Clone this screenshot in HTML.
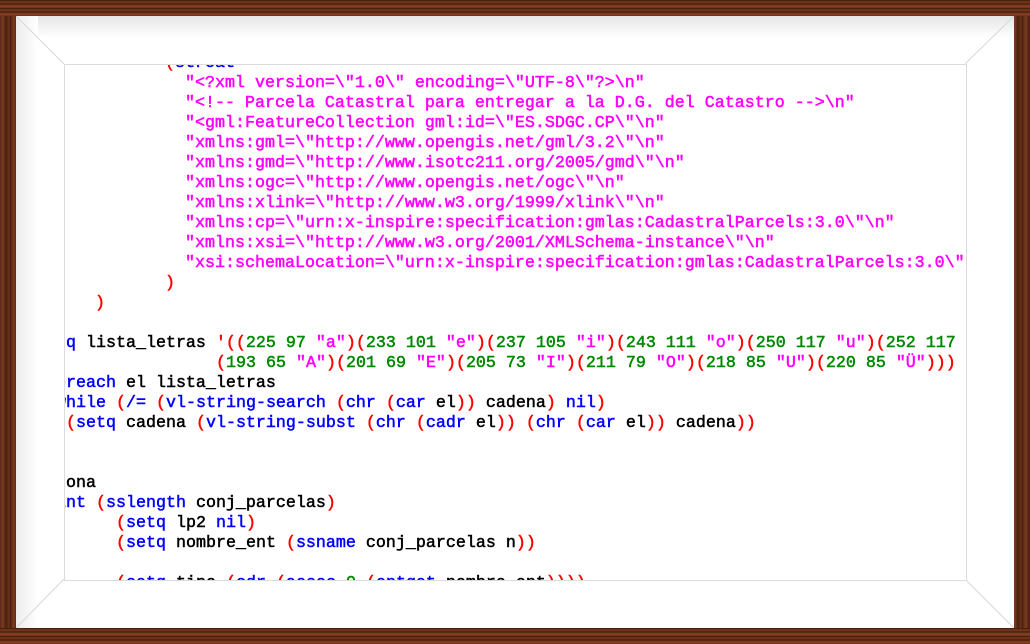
<!DOCTYPE html>
<html><head><meta charset="utf-8"><style>
html,body{margin:0;padding:0;}
body{width:1030px;height:644px;position:relative;overflow:hidden;
background:repeating-linear-gradient(90deg,#5a2a16 0px,#7a3a1e 3px,#4a2010 6px,#6b3218 9px,#3d1a0c 11px);}
.woodh{position:absolute;left:0;width:1030px;height:16px;background:repeating-linear-gradient(0deg,#6a301a 0,#8a4424 2px,#4a2010 4px,#7a3a1e 6px,#3a180a 8px);}
.mat{position:absolute;left:16px;top:16px;width:998px;height:612px;background:#fff;overflow:hidden;}
.shT{position:absolute;left:0;top:0;width:998px;height:22px;background:linear-gradient(#e6e6e6,#fff);}
.shL{position:absolute;left:0;top:0;width:22px;height:612px;background:linear-gradient(90deg,#ececec,#fff);}
.code{position:absolute;left:48px;top:48px;width:901px;height:515px;border:1px solid #dcdcdc;background:#fff;overflow:hidden;}
.l{position:absolute;white-space:pre;font-family:"Liberation Mono","DejaVu Sans Mono",monospace;font-size:16.67px;line-height:20px;font-weight:normal;-webkit-text-stroke:0.5px currentColor;color:#000;}
.r{color:#f00}.b{color:#00f}.m{color:#f0f}.g{color:#080}
svg{position:absolute;left:0;top:0}
</style></head><body>
<div class="woodh" style="top:0"></div><div class="woodh" style="top:628px"></div>
<div class="mat">
<div class="shT"></div><div class="shL"></div>
<svg width="998" height="612"><g stroke="#d8d8d8" stroke-width="1"><line x1="0" y1="0" x2="48" y2="48"/><line x1="998" y1="0" x2="949" y2="48"/><line x1="0" y1="612" x2="48" y2="563"/><line x1="998" y1="612" x2="949" y2="563"/></g></svg>
<div class="code">
<div class="l" style="left:100px;top:-11px"><span class="r">(</span><span class="b">strcat</span></div>
<div class="l m" style="left:120px;top:9px">"&lt;?xml version=\"1.0\" encoding=\"UTF-8\"?&gt;\n"</div>
<div class="l m" style="left:120px;top:29px">"&lt;!-- Parcela Catastral para entregar a la D.G. del Catastro --&gt;\n"</div>
<div class="l m" style="left:120px;top:49px">"&lt;gml:FeatureCollection gml:id=\"ES.SDGC.CP\"\n"</div>
<div class="l m" style="left:120px;top:69px">"xmlns:gml=\"http://www.opengis.net/gml/3.2\"\n"</div>
<div class="l m" style="left:120px;top:89px">"xmlns:gmd=\"http://www.isotc211.org/2005/gmd\"\n"</div>
<div class="l m" style="left:120px;top:109px">"xmlns:ogc=\"http://www.opengis.net/ogc\"\n"</div>
<div class="l m" style="left:120px;top:129px">"xmlns:xlink=\"http://www.w3.org/1999/xlink\"\n"</div>
<div class="l m" style="left:120px;top:149px">"xmlns:cp=\"urn:x-inspire:specification:gmlas:CadastralParcels:3.0\"\n"</div>
<div class="l m" style="left:120px;top:169px">"xmlns:xsi=\"http://www.w3.org/2001/XMLSchema-instance\"\n"</div>
<div class="l m" style="left:120px;top:189px">"xsi:schemaLocation=\"urn:x-inspire:specification:gmlas:CadastralParcels:3.0\"</div>
<div class="l r" style="left:100px;top:209px">)</div>
<div class="l r" style="left:30px;top:229px">)</div>
<div class="l" style="left:-39px;top:269px"><span class="r">(</span><span class="b">setq</span> lista_letras <span class="r">'((</span><span class="g">225 97 </span><span class="m">"a"</span><span class="r">)(</span><span class="g">233 101 </span><span class="m">"e"</span><span class="r">)(</span><span class="g">237 105 </span><span class="m">"i"</span><span class="r">)(</span><span class="g">243 111 </span><span class="m">"o"</span><span class="r">)(</span><span class="g">250 117 </span><span class="m">"u"</span><span class="r">)(</span><span class="g">252 117 </span><span class="m">"ü"</span><span class="r">)</span></div>
<div class="l" style="left:151px;top:289px"><span class="r">(</span><span class="g">193 65 </span><span class="m">"A"</span><span class="r">)(</span><span class="g">201 69 </span><span class="m">"E"</span><span class="r">)(</span><span class="g">205 73 </span><span class="m">"I"</span><span class="r">)(</span><span class="g">211 79 </span><span class="m">"O"</span><span class="r">)(</span><span class="g">218 85 </span><span class="m">"U"</span><span class="r">)(</span><span class="g">220 85 </span><span class="m">"Ü"</span><span class="r">)))</span></div>
<div class="l" style="left:-29px;top:309px"><span class="r">(</span><span class="b">foreach</span> el lista_letras</div>
<div class="l" style="left:-19px;top:329px"><span class="r">(</span><span class="b">while</span> <span class="r">(</span><span class="b">/=</span> <span class="r">(</span><span class="b">vl-string-search</span> <span class="r">(</span><span class="b">chr</span> <span class="r">(</span><span class="b">car</span> el<span class="r">))</span> cadena<span class="r">)</span> <span class="b">nil</span><span class="r">)</span></div>
<div class="l" style="left:1px;top:349px"><span class="r">(</span><span class="b">setq</span> cadena <span class="r">(</span><span class="b">vl-string-subst</span> <span class="r">(</span><span class="b">chr</span> <span class="r">(</span><span class="b">cadr</span> el<span class="r">))</span> <span class="r">(</span><span class="b">chr</span> <span class="r">(</span><span class="b">car</span> el<span class="r">))</span> cadena<span class="r">))</span></div>
<div class="l" style="left:1px;top:409px">ona</div>
<div class="l" style="left:-39px;top:429px"><span class="r">(</span><span class="b">print</span> <span class="r">(</span><span class="b">sslength</span> conj_parcelas<span class="r">)</span></div>
<div class="l" style="left:51px;top:449px"><span class="r">(</span><span class="b">setq</span> lp2 <span class="b">nil</span><span class="r">)</span></div>
<div class="l" style="left:51px;top:469px"><span class="r">(</span><span class="b">setq</span> nombre_ent <span class="r">(</span><span class="b">ssname</span> conj_parcelas n<span class="r">))</span></div>
<div class="l" style="left:51px;top:509px"><span class="r">(</span><span class="b">setq</span> tipo <span class="r">(</span><span class="b">cdr</span> <span class="r">(</span><span class="b">assoc</span> <span class="g">0</span> <span class="r">(</span><span class="b">entget</span> nombre_ent<span class="r">))))</span></div>
</div>
</div>
</body></html>
